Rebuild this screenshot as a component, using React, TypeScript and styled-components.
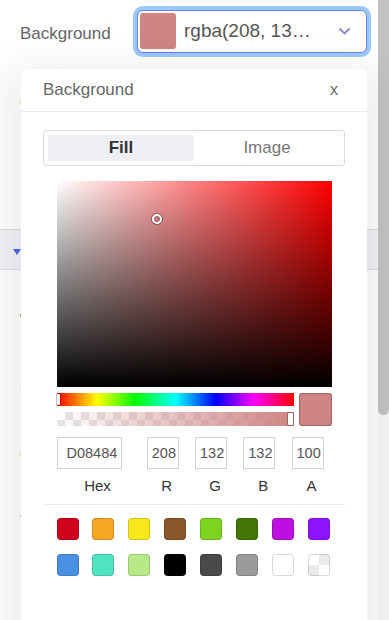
import React from 'react';
import styled, { createGlobalStyle } from 'styled-components';

const Global = createGlobalStyle`
  html, body { margin: 0; padding: 0; background: #fff; overflow: hidden; }
  body { font-family: "Liberation Sans", Arial, sans-serif; }
  * { box-sizing: border-box; }
`;

const Screen = styled.div`
  display: flex;
  width: 389px;
  height: 620px;
  overflow: hidden;
`;

const Main = styled.div`
  position: relative;
  flex: 1;
  min-width: 0;
`;

const ScrollTrack = styled.div`
  flex: none;
  width: 11px;
  background: #f7f7f7;
`;

const ScrollThumb = styled.div`
  height: 415px;
  background: #c3c3c3;
  border-radius: 0 0 6px 6px;
`;

const Row = styled.div<{ $h: number }>`
  display: flex;
  align-items: center;
  height: ${(p) => p.$h}px;
  padding-left: 20px;
`;

const Label = styled.div`
  width: 117px;
  flex: none;
  padding-top: 5px;
  font-size: 17px;
  color: #666;
  white-space: nowrap;
`;

const Select = styled.div`
  width: 230px;
  height: 43px;
  display: flex;
  align-items: center;
  gap: 8px;
  padding: 0 16px 0 2px;
  border: 1px solid #6c7ef0;
  border-radius: 6px;
  box-shadow: 0 0 0 4px #9bc9fa;
  background: #fff;
`;

const SelectSwatch = styled.div<{ $c: string }>`
  width: 36px;
  height: 36px;
  flex: none;
  border-radius: 3px;
  background: ${(p) => p.$c};
`;

const SelectText = styled.div`
  width: 130px;
  flex: none;
  font-size: 19px;
  color: #555;
  white-space: nowrap;
  overflow: hidden;
  text-overflow: ellipsis;
`;

const Chevron = styled.svg`
  margin-left: auto;
  flex: none;
`;

const Spacer = styled.div`
  height: 91px;
`;

const Section = styled.div`
  display: flex;
  align-items: center;
  height: 41px;
  padding: 4px 0 0 13px;
  border-top: 1px solid #dcdcdc;
  border-bottom: 1px solid #dcdcdc;
  background: #f1f2f7;
`;

const RowList = styled.div`
  padding-top: 15px;
`;

const Popover = styled.div`
  position: absolute;
  left: 21px;
  top: 69px;
  width: 346px;
  height: 580px;
  background: #fff;
  border-radius: 8px 8px 0 0;
  box-shadow: 0 12px 40px 18px rgba(0, 0, 0, 0.065);
`;

const PopHeader = styled.div`
  display: flex;
  align-items: center;
  justify-content: space-between;
  height: 43px;
  padding: 0 29px 0 22px;
  border-bottom: 1px solid #ebebeb;
  font-size: 17px;
  color: #666;
`;

const Close = styled.span`
  font-size: 16px;
  color: #666;
`;

const PopBody = styled.div`
  padding: 18px 22px 0;
`;

const Tabs = styled.div`
  display: grid;
  grid-template-columns: 1fr 1fr;
  height: 36px;
  padding: 4px;
  border: 1px solid #dcdcdc;
  border-radius: 3px;
`;

const Tab = styled.div<{ $active?: boolean }>`
  display: flex;
  align-items: center;
  justify-content: center;
  font-size: 17px;
  font-weight: ${(p) => (p.$active ? 700 : 400)};
  color: ${(p) => (p.$active ? '#333' : '#777')};
  background: ${(p) => (p.$active ? '#eef0f5' : 'transparent')};
  border-radius: 2px;
`;

const Picker = styled.div`
  width: 275px;
  margin: 15px auto 0;
`;

const Saturation = styled.div`
  position: relative;
  height: 206px;
  background: linear-gradient(to top, #000, rgba(0, 0, 0, 0)),
    linear-gradient(to right, #fff, rgba(255, 255, 255, 0)), hsl(0, 100%, 50%);
`;

const SatCursor = styled.div`
  position: absolute;
  width: 10px;
  height: 10px;
  border-radius: 50%;
  border: 2px solid #fff;
  transform: translate(-50%, -50%);
  box-shadow: 0 0 0 1px rgba(0, 0, 0, 0.35), inset 0 0 1px 1px rgba(0, 0, 0, 0.3);
`;

const Sliders = styled.div`
  display: flex;
  gap: 5px;
  margin-top: 6px;
`;

const Bars = styled.div`
  flex: 1;
  display: flex;
  flex-direction: column;
  gap: 6px;
`;

const HueBar = styled.div`
  position: relative;
  height: 13px;
  background: linear-gradient(
    to right,
    #f00 0%,
    #ff0 17%,
    #0f0 33%,
    #0ff 50%,
    #00f 67%,
    #f0f 83%,
    #f00 100%
  );
`;

const AlphaBar = styled.div<{ $c: string }>`
  position: relative;
  height: 14px;
  background: linear-gradient(to right, rgba(208, 132, 132, 0), ${(p) => p.$c}),
    repeating-conic-gradient(#e6e6e6 0% 25%, #fff 0% 50%) 0 0 / 16px 16px;
`;

const Pointer = styled.div<{ $right?: boolean }>`
  position: absolute;
  top: 1px;
  ${(p) => (p.$right ? 'right: 1px;' : 'left: 0;')}
  width: ${(p) => (p.$right ? 5 : 3)}px;
  height: ${(p) => (p.$right ? 12 : 11)}px;
  background: #fff;
  border-radius: 1px;
  box-shadow: 0 0 0 1px rgba(0, 0, 0, 0.25);
`;

const Preview = styled.div<{ $c: string }>`
  width: 33px;
  height: 33px;
  flex: none;
  border-radius: 3px;
  background: ${(p) => p.$c};
  box-shadow: inset 0 0 0 1px rgba(0, 0, 0, 0.15), inset 0 0 3px rgba(0, 0, 0, 0.2);
`;

const Fields = styled.div`
  display: grid;
  grid-template-columns: 82px repeat(4, 40px);
  column-gap: 8.25px;
  margin-top: 11px;
`;

const Field = styled.div`
  display: flex;
  flex-direction: column;
`;

const FieldInput = styled.div<{ $pad: number }>`
  width: 80%;
  height: 32px;
  display: flex;
  align-items: center;
  padding-left: ${(p) => p.$pad}px;
  border: 1px solid #d2d2d2;
  font-size: 14.5px;
  color: #555;
  white-space: nowrap;
  overflow: hidden;
`;

const FieldLabel = styled.div`
  margin-top: 8px;
  line-height: 17px;
  text-align: center;
  font-size: 15px;
  color: #333;
`;

const Divider = styled.div`
  height: 1px;
  margin-top: 10px;
  background: #ececec;
`;

const Swatches = styled.div`
  display: grid;
  grid-template-columns: repeat(8, 22px);
  column-gap: 13.86px;
  row-gap: 14px;
  width: 275px;
  margin: 13px auto 0;
`;

const Swatch = styled.div<{ $c: string }>`
  width: 22px;
  height: 22px;
  border-radius: 4px;
  background: ${(p) =>
    p.$c === 'transparent'
      ? 'repeating-conic-gradient(#ebebeb 0% 25%, #fff 0% 50%) 0 0 / 22px 22px'
      : p.$c};
  box-shadow: inset 0 0 0 1px rgba(0, 0, 0, 0.15);
`;

const COLOR = 'rgb(208, 132, 132)';

const PRESETS = [
  '#D0021B', '#F5A623', '#F8E71C', '#8B572A', '#7ED321', '#417505', '#BD10E0', '#9013FE',
  '#4A90E2', '#50E3C2', '#B8E986', '#000000', '#4A4A4A', '#9B9B9B', '#FFFFFF', 'transparent',
];

const FIELDS = [
  { label: 'Hex', value: 'D08484', pad: 9 },
  { label: 'R', value: '208', pad: 4 },
  { label: 'G', value: '132', pad: 4 },
  { label: 'B', value: '132', pad: 4 },
  { label: 'A', value: '100', pad: 4 },
];

export default function App() {
  return (
    <Screen>
      <Global />
      <Main>
        <Row $h={62}>
          <Label>Background</Label>
          <Select>
            <SelectSwatch $c={COLOR} />
            <SelectText>rgba(208, 132, 132, 1)</SelectText>
            <Chevron width="11" height="7" viewBox="0 0 11 7">
              <polyline points="1,1 5.5,5.5 10,1" fill="none" stroke="#8d90c8" strokeWidth="2" strokeLinecap="round" strokeLinejoin="round" />
            </Chevron>
          </Select>
        </Row>
        <Row $h={76}>
          <Label>Color</Label>
        </Row>
        <Spacer />
        <Section>
          <svg width="8" height="6" viewBox="0 0 8 6">
            <polygon points="0,0 8,0 4,6" fill="#4b63e6" />
          </svg>
        </Section>
        <RowList>
          <Row $h={67}><Label>Width</Label></Row>
          <Row $h={67}><Label>Spacing</Label></Row>
          <Row $h={67}><Label>Corners</Label></Row>
          <Row $h={67}><Label>Text</Label></Row>
        </RowList>

        <Popover>
          <PopHeader>
            <span>Background</span>
            <Close>x</Close>
          </PopHeader>
          <PopBody>
            <Tabs>
              <Tab $active>Fill</Tab>
              <Tab>Image</Tab>
            </Tabs>
            <Picker>
              <Saturation>
                <SatCursor style={{ left: '36.5%', top: '18.4%' }} />
              </Saturation>
              <Sliders>
                <Bars>
                  <HueBar>
                    <Pointer />
                  </HueBar>
                  <AlphaBar $c={COLOR}>
                    <Pointer $right />
                  </AlphaBar>
                </Bars>
                <Preview $c={COLOR} />
              </Sliders>
              <Fields>
                {FIELDS.map((f) => (
                  <Field key={f.label}>
                    <FieldInput $pad={f.pad}>{f.value}</FieldInput>
                    <FieldLabel>{f.label}</FieldLabel>
                  </Field>
                ))}
              </Fields>
            </Picker>
            <Divider />
            <Swatches>
              {PRESETS.map((c) => (
                <Swatch key={c} $c={c} />
              ))}
            </Swatches>
          </PopBody>
        </Popover>
      </Main>
      <ScrollTrack>
        <ScrollThumb />
      </ScrollTrack>
    </Screen>
  );
}
